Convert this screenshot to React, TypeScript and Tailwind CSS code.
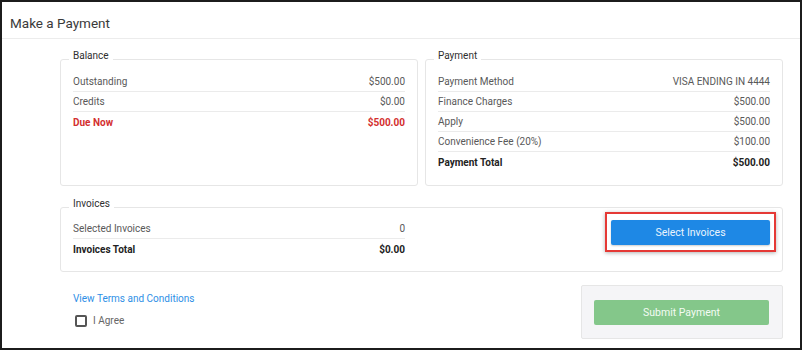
import type { ReactNode } from 'react';

interface Row {
  label: string;
  value: string;
  tone?: 'normal' | 'bold' | 'red';
}

const balanceRows: Row[] = [
  { label: 'Outstanding', value: '$500.00' },
  { label: 'Credits', value: '$0.00' },
  { label: 'Due Now', value: '$500.00', tone: 'red' },
];

const paymentRows: Row[] = [
  { label: 'Payment Method', value: 'VISA ENDING IN 4444' },
  { label: 'Finance Charges', value: '$500.00' },
  { label: 'Apply', value: '$500.00' },
  { label: 'Convenience Fee (20%)', value: '$100.00' },
  { label: 'Payment Total', value: '$500.00', tone: 'bold' },
];

const invoiceRows: Row[] = [
  { label: 'Selected Invoices', value: '0' },
  { label: 'Invoices Total', value: '$0.00', tone: 'bold' },
];

function Rows({ rows }: { rows: Row[] }) {
  return (
    <div className="divide-y divide-[#ebebeb]">
      {rows.map((r) => {
        const tone =
          r.tone === 'red'
            ? 'font-bold text-[#d32f2f]'
            : r.tone === 'bold'
            ? 'font-bold text-[#222]'
            : 'text-[#595959]';
        return (
          <div key={r.label} className={`flex h-5 items-center justify-between text-[10px] ${tone}`}>
            <span>{r.label}</span>
            <span>{r.value}</span>
          </div>
        );
      })}
    </div>
  );
}

function Box({ title, children, className = '' }: { title: string; children: ReactNode; className?: string }) {
  return (
    <fieldset className={`min-w-0 rounded-[3px] border border-[#e6e6e6] px-3 ${className}`}>
      <legend className="-ml-1 px-1 pb-[7px] text-[10px] leading-[13px] text-[#2f2f2f]">
        {title}
      </legend>
      {children}
    </fieldset>
  );
}

export default function App() {
  return (
    <div
      className="h-[350px] w-[802px] border-2 border-[#1c1c1c] bg-white"
      style={{ fontFamily: 'Roboto, "Liberation Sans", sans-serif' }}
    >
      <div className="flex h-[37px] items-center border-b border-[#ececec] pt-[6px] pl-2">
        <h1 className="text-[13.5px] text-[#3a3a3a]">Make a Payment</h1>
      </div>

      <div className="pt-[10px] pr-[17px] pl-[58px]">
        <div className="grid grid-cols-2 gap-[7px]">
          <Box title="Balance" className="pt-[3px] pb-[13px]">
            <Rows rows={balanceRows} />
          </Box>
          <Box title="Payment" className="pt-[3px] pb-[13px]">
            <Rows rows={paymentRows} />
          </Box>
        </div>

        <Box title="Invoices" className="mt-[11px] pt-[2px] pb-[12px]">
          <div className="grid grid-cols-2 gap-[33px]">
            <Rows rows={invoiceRows} />
            <div className="flex items-start justify-end">
              <div className="-mt-[7px] -mr-[6px] border-2 border-[#e53935] px-1 py-[5px] shadow-[0_1px_4px_rgba(0,0,0,0.3)]">
                <button className="h-[25px] w-[159px] rounded-[2px] bg-[#1e88e5] text-[10.5px] text-[#eaf4fd] shadow-[0_1px_2px_rgba(0,0,0,0.2)]">
                  Select Invoices
                </button>
              </div>
            </div>
          </div>
        </Box>

        <div className="mt-[13px] grid grid-cols-2 gap-[7px]">
          <div className="pt-[7px] pl-[13px]">
            <a href="#" className="block text-[10px] leading-[13px] text-[#2e8fe6]">
              View Terms and Conditions
            </a>
            <label className="mt-[8px] flex items-center gap-[6px] pl-[2px] text-[10px] text-[#666]">
              <span className="h-[12px] w-[12px] rounded-[2px] border-2 border-[#555]" />
              I Agree
            </label>
          </div>
          <div className="flex justify-end">
            <div className="w-[202px] rounded-[2px] border border-[#e6e6e6] bg-[#f5f5f7] pt-[13px] pr-[13px] pb-[13px] pl-[12px]">
              <button className="h-[25px] w-full rounded-[2px] bg-[#84c78a] text-[10.5px] text-[#f3fbf3]">
                Submit Payment
              </button>
            </div>
          </div>
        </div>
      </div>
    </div>
  );
}
